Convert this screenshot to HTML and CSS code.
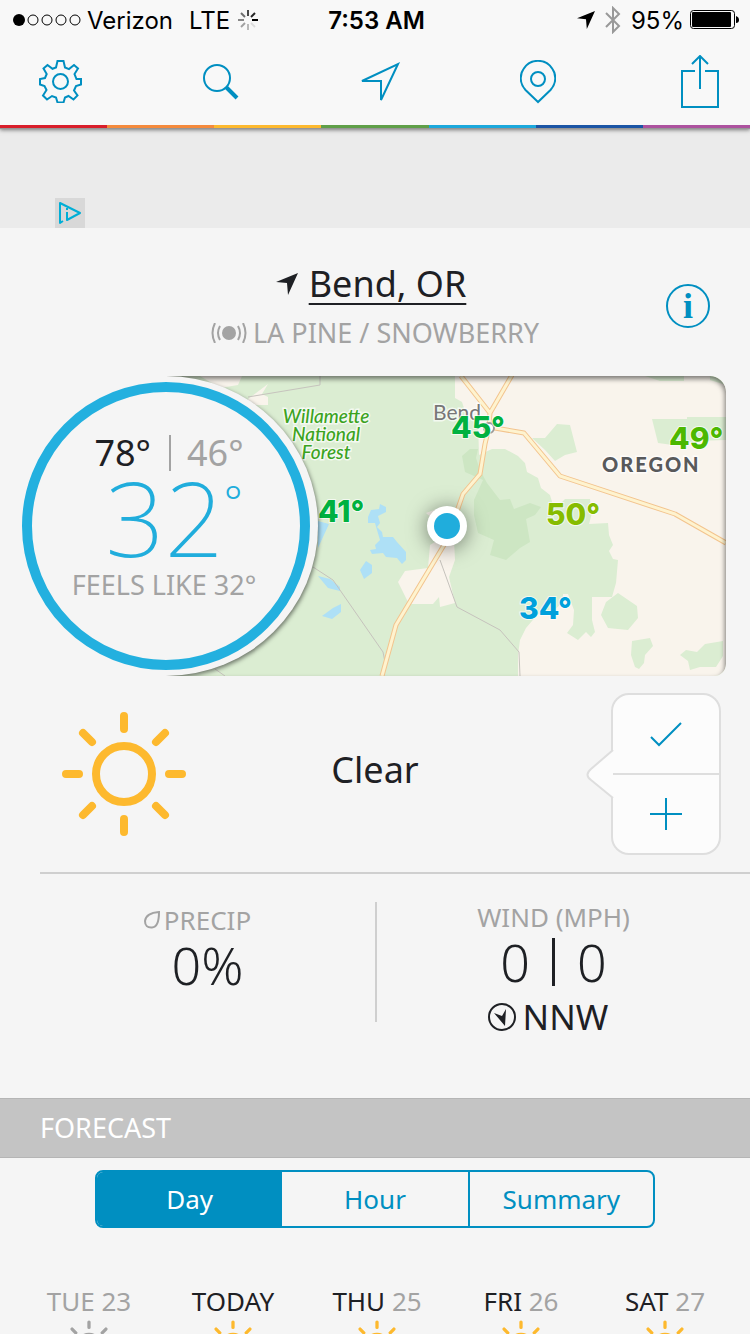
FILE: index.html
```html
<!DOCTYPE html>
<html lang="en">
<head>
    <meta charset="UTF-8">
    <meta name="viewport" content="width=device-width, initial-scale=1.0">
    <title>Weather - Bend, OR</title>
    <link rel="stylesheet" href="styles.css">
</head>
<body>
    <svg class="sprite" aria-hidden="true">
        <symbol id="sun" viewBox="0 0 126 126">
            <g fill="none" stroke="currentColor" stroke-width="8" stroke-linecap="round">
                <circle cx="63" cy="63" r="28" />
                <path d="M63 5v13M63 108v13M5 63h13M108 63h13M22 22l9 9M95 95l9 9M22 104l9-9M95 31l9-9" />
            </g>
        </symbol>
        <symbol id="arrow" viewBox="0 0 22 22">
            <path fill="currentColor" d="M22 0L12 22l-1-12L0 9z" />
        </symbol>
    </svg>

    <div class="app">
        <header class="header">
            <div class="status-bar">
                <div class="status-left">
                    <svg class="signal" width="68" height="12" viewBox="0 0 68 12">
                        <circle cx="6" cy="6" r="6" />
                        <g fill="none" stroke="#000" stroke-width="1">
                            <circle cx="20" cy="6" r="5" />
                            <circle cx="34" cy="6" r="5" />
                            <circle cx="48" cy="6" r="5" />
                            <circle cx="62" cy="6" r="5" />
                        </g>
                    </svg>
                    <span>Verizon</span>
                    <span class="network">LTE</span>
                    <svg class="spinner" width="20" height="20" viewBox="0 0 20 20" stroke="#000" stroke-width="2">
                        <path d="M10 0v6" opacity=".7" />
                        <path d="M17 3l-4 4" opacity=".85" />
                        <path d="M14 10h6" />
                        <path d="M13 13l4 4" opacity=".1" />
                        <path d="M10 14v6" opacity=".25" />
                        <path d="M3 17l4-4" opacity=".35" />
                        <path d="M0 10h6" opacity=".45" />
                        <path d="M3 3l4 4" opacity=".55" />
                    </svg>
                </div>
                <time class="clock">7:53 AM</time>
                <div class="status-right">
                    <svg class="status-arrow" width="18" height="18"><use href="#arrow" /></svg>
                    <svg class="bluetooth" width="16" height="28" viewBox="0 0 16 28" fill="none" stroke="#999" stroke-width="2">
                        <path d="M1 7l13 13-6 6V2l6 6L1 21" />
                    </svg>
                    <span>95%</span>
                    <svg width="50" height="20" viewBox="0 0 50 20">
                        <rect x=".5" y=".5" width="44" height="18" rx="3" fill="none" stroke="#000" />
                        <rect x="2" y="2" width="39" height="15" rx="1" />
                        <path d="M46 6q3 1 3 4t-3 3z" />
                    </svg>
                </div>
            </div>

            <nav class="toolbar">
                <button class="tool" aria-label="Settings">
                    <svg width="43" height="43" viewBox="0 0 43 43">
                        <circle cx="21.500" cy="21.500" r="7.500" />
                        <path d="M18.500 1h6l1.500 6.500 4 1.600L35 5l4 3.500-3.500 5.500 2 5L42 19v5.500l-5 1.500-2 4.500 3.500 5-4 4-5-3.500-3.500 1.500-1.500 5h-6L17 37.500 13 36l-5 3.500-4-4L7.500 30l-2-4L1 24.500V19l5-1 1.700-4L4.500 8.500 8.500 5l5 3.800L17 7.500z" />
                    </svg>
                </button>
                <button class="tool" aria-label="Search">
                    <svg width="38" height="36" viewBox="0 0 38 36">
                        <circle cx="16" cy="14" r="13" />
                        <path d="M25.500 23.500L36 34" stroke-width="4" />
                    </svg>
                </button>
                <button class="tool" aria-label="My location">
                    <svg width="42" height="42" viewBox="0 0 42 42">
                        <path d="M39 3L22 39V20H3z" />
                    </svg>
                </button>
                <button class="tool" aria-label="Places">
                    <svg width="36" height="44" viewBox="0 0 36 44">
                        <path d="M18 42L5.500 30C-1 23 0 14 3.500 9a17 17 0 0 1 29 0c3.500 5 4.500 14-2 21z" />
                        <circle cx="18" cy="19" r="7" />
                    </svg>
                </button>
                <button class="tool share" aria-label="Share">
                    <svg width="38" height="54" viewBox="0 0 38 54">
                        <path d="M14 16H1v36h36V16H24M19 34V1M11 9l8-8 8 8" />
                    </svg>
                </button>
            </nav>

            <div class="rainbow">
                <i class="red"></i><i class="orange"></i><i class="yellow"></i><i class="green"></i><i class="sky"></i><i class="navy"></i><i class="purple"></i>
            </div>
        </header>

        <aside class="ad">
            <a class="ad-choices" href="#" aria-label="Ad choices">
                <svg width="24" height="24" viewBox="0 0 24 24" fill="none" stroke="#00aed6" stroke-width="2" stroke-linejoin="round">
                    <path d="M5 20l-3 2V2l20 10-13 7v-8" />
                    <path d="M9 7v2" />
                </svg>
            </a>
        </aside>

        <section class="location">
            <h1 class="city">
                <svg width="22" height="22"><use href="#arrow" /></svg>
                <a href="#">Bend, OR</a>
            </h1>
            <p class="station">
                <svg width="36" height="20" viewBox="0 0 36 20" fill="none" stroke="#a3a3a3" stroke-width="2">
                    <circle cx="18" cy="10" r="7" fill="#a3a3a3" stroke="none" />
                    <path d="M9 3q-4 7 0 14M4 0q-5 10 0 20M27 3q4 7 0 14M32 0q5 10 0 20" />
                </svg>
                <span>LA PINE / SNOWBERRY</span>
            </p>
            <button class="info" aria-label="Station information">i</button>
        </section>

        <section class="overview">
            <div class="map">
                <svg class="map-art" viewBox="166 376 560 300" preserveAspectRatio="xMaxYMid slice" role="img" aria-label="Map of temperatures around Bend">
                    <rect x="166" y="376" width="560" height="300" fill="#dbedd2" />
                    <!-- open land -->
                    <g fill="#f9f4ec">
                        <path d="M455 376L455 398 462 402 467 417 478 421 479 455 492 449 505 449 518 456 525 463 527 472 538 478 541 488 550 495 553 505 562 502 565 499 590 499 592 513 589 524 608 523 609 535 613 545 609 551 613 559 618 560 616 583 612 597 592 597 592 620 595 632 591 637 586 632 578 640 567 633 573 625 574 610 568 594 563 594 563 602 552 612 538 614 526 628 520 640 518 655 518 676 726 676 726 376z" />
                        <path d="M430 545L438 540 454 541 455 560 449 577 455 603 440 607 439 597 433 604 409 604 402 590 398 582 405 571 428 568z" />
                        <path d="M200 376L242 376 238 385 220 388zM248 399L268 384 262 394 268 397 268 405 250 405zM426 513L434 510 434 520z" />
                    </g>
                    <path fill="#cde6c3" d="M462 456L470 449 478 449 476 458 480 470 487 483 500 500 510 499 514 509 530 503 541 507 535 515 526 519 530 542 520 548 506 560 490 555 494 540 478 533 474 515 474 500 483 480 465 472z" />
                    <!-- woods in the high desert -->
                    <g fill="#dbedd2">
                        <path d="M532 438L545 438 557 424 570 425 577 452 565 455 555 461 545 450zM652 419L687 419 687 417 726 417 726 440 695 441 680 446 658 443zM645 376h39v5h-24zM710 376h16v9l-16-5z" />
                        <path d="M618 593L637 606 638 618 628 630 608 628 601 615 606 602zM632 641L650 638 653 646 645 655 644 663 639 669 635 667 631 655zM680 655L686 650 697 652 705 644 723 641 723 656 716 667 700 667 690 670 688 661z" />
                    </g>
                    <g fill="#aee0f6">
                        <path d="M318 521l11 3-11 24zM360 570l6-9 6 4v8l-8 6zM318 576l12 3 10 8v4l-12-3zM322 616l11-8 8-4v8l-9 7z" />
                        <path d="M368 517L371 510 379 509 380 504 386 507 386 512 378 516 380 523 377 527 382 532 383 537 393 537 397 542 406 552 406 560 402 564 397 558 386 557 383 553 372 554 370 550 376 549 375 545 380 540 377 530 375 523 368 523z" />
                    </g>
                    <g fill="none" stroke="#c6c3bd">
                        <path d="M248 397l72-12v-9M313 567l20 13 50 72 2 10M440 560l17 47 43 23 19 22 1 24M215 669l10 7" />
                    </g>
                    <g fill="none" stroke-linejoin="round">
                        <path stroke="#f3c48e" stroke-width="5" d="M461 376l29 37 22-38M490 413l-1 14 35 6 36 43 115 38 51 29M489 427l-4 17-5 30-17 20-16 46-51 85-14 51" />
                        <path stroke="#fef3cf" stroke-width="3" d="M461 376l29 37 22-38M490 413l-1 14 35 6 36 43 115 38 51 29M489 427l-4 17-5 30-17 20-16 46-51 85-14 51" />
                    </g>
                    <circle cx="489" cy="428" r="5" fill="#fff" stroke="#999" stroke-width="2" />
                    <g class="map-label forest" text-anchor="middle">
                        <text x="326" y="423">Willamette</text>
                        <text x="326" y="441">National</text>
                        <text x="326" y="459">Forest</text>
                    </g>
                    <text class="map-label town" x="433" y="420">Bend</text>
                    <text class="map-label state" x="602" y="472">OREGON</text>
                    <g class="map-label temp">
                        <text x="451" y="438" fill="#00b140">45°</text>
                        <text x="318" y="522" fill="#00b140">41°</text>
                        <text x="669" y="449" fill="#4cb800">49°</text>
                        <text x="546" y="525" fill="#86bc00">50°</text>
                        <text x="519" y="619" fill="#00a0dc">34°</text>
                    </g>
                    <g class="marker">
                        <circle cx="447" cy="526" r="20" fill="#fff" />
                        <circle cx="447" cy="526" r="13" fill="#20addc" />
                    </g>
                </svg>
            </div>
            <div class="dial">
                <p class="high-low">
                    <span class="high">78°</span>
                    <span class="low">46°</span>
                </p>
                <p class="current">32<sup>°</sup></p>
                <p class="feels-like">FEELS LIKE 32°</p>
            </div>
        </section>

        <section class="condition">
            <svg class="sun-icon" width="126" height="126"><use href="#sun" /></svg>
            <p class="condition-text">Clear</p>
            <div class="report">
                <svg class="report-pointer" width="28" height="52" viewBox="0 0 28 52">
                    <path d="M27 2L5 21q-7 6 0 11l22 18z" fill="#fcfcfc" />
                    <path d="M27 2L5 21q-7 6 0 11l22 18" fill="none" stroke="#dedede" stroke-width="2" />
                </svg>
                <button aria-label="Confirm condition">
                    <svg width="32" height="32" viewBox="0 0 32 32"><path d="M1 19l8 8L31 5" /></svg>
                </button>
                <button aria-label="Report another condition">
                    <svg width="32" height="32" viewBox="0 0 32 32"><path d="M0 16h32M16 0v32" /></svg>
                </button>
            </div>
        </section>

        <section class="details">
            <div class="detail precip">
                <h2>
                    <svg width="16" height="18" viewBox="0 0 16 18" fill="none" stroke="#a3a3a3" stroke-width="2">
                        <path d="M15 1q0 15-7 15.500Q1 17 1 10 2 2 15 1z" />
                    </svg>
                    PRECIP
                </h2>
                <p class="value">0%</p>
            </div>
            <div class="detail wind">
                <h2>WIND (MPH)</h2>
                <p class="value"><span>0</span><i></i><span>0</span></p>
                <p class="direction">
                    <svg width="30" height="30" viewBox="0 0 30 30">
                        <circle cx="15" cy="15" r="13" fill="none" stroke="#1e2024" stroke-width="2" />
                        <path d="M7 11l8 3 4-7-1 17z" fill="#1e2024" />
                    </svg>
                    NNW
                </p>
            </div>
        </section>

        <h2 class="section-title">FORECAST</h2>

        <section class="forecast">
            <div class="tabs">
                <button class="tab active" aria-pressed="true">Day</button>
                <button class="tab" aria-pressed="false">Hour</button>
                <button class="tab" aria-pressed="false">Summary</button>
            </div>
            <ul class="days">
                <li class="past">TUE <span>23</span><svg width="52" height="52"><use href="#sun" /></svg></li>
                <li>TODAY<svg width="52" height="52"><use href="#sun" /></svg></li>
                <li>THU <span>25</span><svg width="52" height="52"><use href="#sun" /></svg></li>
                <li>FRI <span>26</span><svg width="52" height="52"><use href="#sun" /></svg></li>
                <li>SAT <span>27</span><svg width="52" height="52"><use href="#sun" /></svg></li>
            </ul>
        </section>
    </div>
</body>
</html>
```
FILE: styles.css
```css
* {
    box-sizing: border-box;
}

body,
h1,
h2,
p,
ul {
    margin: 0;
    padding: 0;
    font-weight: 400;
}

body {
    font-family: "Noto Sans", "Open Sans", sans-serif;
    color: #1e2024;
    background-color: #f5f5f5;
}

svg {
    display: block;
    flex: none;
}

button {
    font-family: inherit;
    padding: 0;
    border: none;
    background: none;
    color: #008fc1;
    cursor: pointer;
}

.sprite {
    position: absolute;
    width: 0;
    height: 0;
}

.app {
    height: 100vh;
    overflow: hidden;
}

/* header */
.header {
    position: relative;
    background-color: #f8f8f8;
    box-shadow: 0 1px 4px rgba(0, 0, 0, 0.5);
}

.status-bar {
    display: grid;
    grid-template-columns: 1fr auto 1fr;
    align-items: center;
    height: 40px;
    padding: 0 10px 0 13px;
    font-family: Inter, sans-serif;
    font-size: 24px;
    color: #000;
}

.status-left,
.status-right {
    display: flex;
    align-items: center;
    gap: 6px;
}

.status-right {
    justify-content: flex-end;
}

.network {
    margin-left: 10px;
}

.spinner {
    margin-left: 2px;
}

.clock {
    font-weight: 600;
}

.status-arrow,
.bluetooth {
    margin-right: 4px;
}

.toolbar {
    display: flex;
    justify-content: space-between;
    align-items: center;
    height: 85px;
    padding: 0 31px 2px 39px;
}

.tool svg {
    fill: none;
    stroke: #008fc1;
    stroke-width: 2;
}

.share {
    margin-left: 6px;
}

.rainbow {
    display: flex;
    height: 4px;
    border-bottom: 1px solid rgba(0, 0, 0, 0.4);
}

.rainbow i {
    flex: 1;
}

.red { background-color: #d91f2b; }
.orange { background-color: #f58a3c; }
.yellow { background-color: #fdb92e; }
.green { background-color: #5f9f48; }
.sky { background-color: #1ba8dc; }
.navy { background-color: #1b55a5; }
.purple { background-color: #ad529f; }

/* ad slot */
.ad {
    display: flex;
    align-items: flex-end;
    height: 99px;
    padding-left: 55px;
    background-color: #ebebeb;
}

.ad-choices {
    padding: 3px;
    background-color: #d8d8d8;
}

/* location */
.location {
    position: relative;
    padding-top: 30px;
    height: 148px;
}

.city,
.station {
    display: flex;
    justify-content: center;
    align-items: center;
}

.city {
    gap: 11px;
    padding-right: 8px;
    font-size: 36px;
    line-height: 52px;
}

.city a {
    color: inherit;
    text-decoration-thickness: 2px;
    text-underline-offset: 6px;
}

.station {
    gap: 6px;
    font-size: 27px;
    line-height: 46px;
    color: #a3a3a3;
}

.info {
    position: absolute;
    top: 56px;
    right: 40px;
    width: 44px;
    height: 44px;
    border: 2px solid #008fc1;
    border-radius: 50%;
    font: bold 36px/38px "Liberation Serif", serif;
}

/* map and dial */
.overview {
    position: relative;
    padding: 0 24px 0 166px;
}

.map {
    position: relative;
    height: 300px;
    border-radius: 0 16px 12px 0;
    overflow: hidden;
}

.map::after {
    content: "";
    position: absolute;
    inset: 0;
    border-radius: inherit;
    box-shadow: inset -1px 3px 5px rgba(0, 0, 0, 0.5);
}

/* plate under the dial, cut off by the map edge */
.map::before {
    content: "";
    position: absolute;
    z-index: 1;
    top: 0;
    left: -152px;
    width: 304px;
    height: 300px;
    border-radius: 50%;
    background-color: #f5f5f5;
    box-shadow: 1px 2px 4px rgba(0, 0, 0, 0.5);
}

.map-art {
    width: 100%;
    height: 100%;
}

.map-label {
    font-family: Lato, sans-serif;
    paint-order: stroke;
    stroke: rgba(255, 255, 255, 0.7);
    stroke-width: 3px;
}

.forest {
    font-size: 19px;
    font-style: italic;
    font-weight: 500;
    fill: #3ba31e;
}

.town {
    font-size: 21px;
    fill: #777;
}

.state {
    font-size: 20px;
    font-weight: 900;
    letter-spacing: 2px;
    fill: #58595b;
}

.temp {
    font-family: Inter, sans-serif;
    font-size: 30px;
    font-weight: 800;
    stroke-width: 2px;
}

.marker {
    filter: drop-shadow(0 2px 10px rgba(0, 0, 0, 0.5));
}

.dial {
    position: absolute;
    z-index: 1;
    top: 6px;
    left: 22px;
    width: 288px;
    height: 288px;
    padding-top: 43px;
    border: 10px solid #23b0df;
    border-radius: 50%;
    background-color: #f5f5f5;
    text-align: center;
}

.high-low {
    display: flex;
    justify-content: center;
    padding-left: 6px;
    font-size: 36px;
    line-height: 36px;
}

.high {
    padding-right: 18px;
}

.low {
    padding-left: 16px;
    border-left: 2px solid #a3a3a3;
    color: #a3a3a3;
}

.current {
    display: flex;
    justify-content: center;
    height: 94px;
    padding-left: 16px;
    font-size: 104px;
    font-weight: 200;
    line-height: 92px;
    color: #20addc;
}

.current sup {
    font-size: 44px;
    font-weight: 300;
    line-height: 60px;
}

.feels-like {
    padding-right: 4px;
    font-size: 27px;
    line-height: 40px;
    color: #a3a3a3;
}

/* current condition */
.condition {
    display: grid;
    grid-template-columns: 1fr auto 1fr;
    align-items: center;
    height: 196px;
    padding: 0 29px 0 61px;
}

.sun-icon {
    color: #fdb92e;
}

.condition-text {
    padding: 0 32px 10px 0;
    font-size: 36px;
}

.report {
    position: relative;
    justify-self: end;
    width: 110px;
    border: 2px solid #dedede;
    border-radius: 18px;
    background-color: #fcfcfc;
}

.report-pointer {
    position: absolute;
    top: 53px;
    left: -27px;
}

.report button {
    display: flex;
    justify-content: center;
    align-items: center;
    width: 100%;
    height: 78px;
}

.report button + button {
    height: 80px;
    border-top: 2px solid #dedede;
}

.report button svg {
    fill: none;
    stroke: #008fc1;
    stroke-width: 2;
}

/* precip and wind */
.details {
    display: grid;
    grid-template-columns: 337px 1fr;
    height: 226px;
    margin-left: 40px;
    padding-top: 28px;
    border-top: 2px solid #cfcfcf;
}

.detail {
    display: flex;
    flex-direction: column;
    align-items: center;
    height: 120px;
}

.detail h2 {
    display: flex;
    align-items: center;
    gap: 4px;
    font-size: 26px;
    line-height: 30px;
    color: #a3a3a3;
}

.precip {
    padding-top: 3px;
    border-right: 2px solid #cfcfcf;
}

.precip h2 svg {
    margin-left: -20px;
}

.wind {
    padding-right: 20px;
}

.value {
    display: flex;
    align-items: center;
    gap: 22px;
    font-size: 52px;
    font-weight: 300;
    line-height: 60px;
}

.value i {
    width: 3px;
    height: 48px;
    background-color: #1e2024;
}

.direction {
    display: flex;
    align-items: center;
    gap: 6px;
    padding-right: 12px;
    font-size: 35px;
    line-height: 50px;
}

/* forecast */
.section-title {
    height: 60px;
    padding-left: 40px;
    border: solid #b5b5b5;
    border-width: 1px 0;
    background-color: #c4c4c4;
    font-size: 27px;
    line-height: 58px;
    color: #fff;
}

.tabs {
    display: grid;
    grid-template-columns: repeat(3, 1fr);
    height: 58px;
    margin: 12px 95px 0;
    border: 2px solid #008fc1;
    border-radius: 8px;
    overflow: hidden;
}

.tab {
    font-size: 26px;
}

.tab + .tab {
    border-left: 2px solid #008fc1;
}

.tab.active {
    background-color: #008fc1;
    color: #fff;
}

.tab.active + .tab {
    border-left: none;
}

.days {
    display: grid;
    grid-template-columns: repeat(5, 1fr);
    padding: 55px 13px 0 17px;
    list-style: none;
    text-align: center;
    font-size: 26px;
    line-height: 36px;
}

.days span,
.days .past {
    color: #a3a3a3;
}

.days svg {
    margin: 1px auto 0;
    color: #fdb92e;
}

.days .past svg {
    color: #a3a3a3;
}
```
